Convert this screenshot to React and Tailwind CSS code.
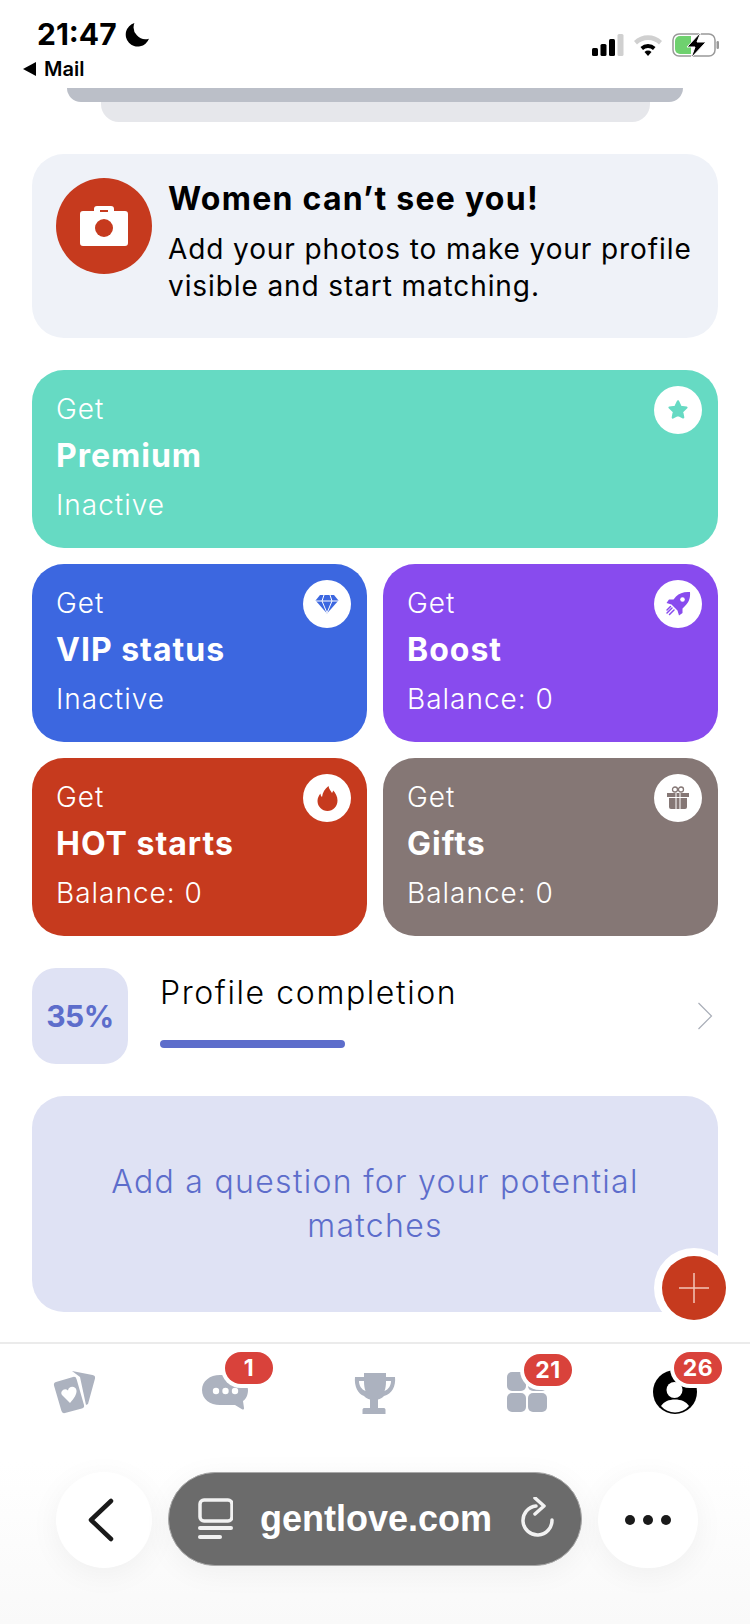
const PROMOS = [
  [{ label: "Premium", sub: "Inactive", bg: "bg-[#66dac3]", icon: "star" }],
  [
    { label: "VIP status", sub: "Inactive", bg: "bg-[#3c67e0]", icon: "gem" },
    { label: "Boost", sub: "Balance: 0", bg: "bg-[#884bee]", icon: "rocket" },
  ],
  [
    { label: "HOT starts", sub: "Balance: 0", bg: "bg-[#c63a1e]", icon: "fire" },
    { label: "Gifts", sub: "Balance: 0", bg: "bg-[#857775]", icon: "gift" },
  ],
];

function PromoIcon({ name }) {
  if (name === "star") {
    return (
      <svg width="24" height="24" viewBox="0 0 22 22" className="text-[#66dac3]">
        <path d="M11 3l2.400 5 5.400.7-4 3.800 1 5.400L11 15.300 6.200 17.900l1-5.400-4-3.800 5.400-.7z" fill="currentColor" stroke="currentColor" strokeWidth="2" strokeLinejoin="round" />
      </svg>
    );
  }
  if (name === "gem") {
    return (
      <svg width="24" height="20" viewBox="0 0 24 20" className="text-[#3c67e0]">
        <path d="M5 1h14l4.500 5.500L12 19.500.5 6.500z" fill="currentColor" />
        <path d="M.5 7h23M7 7l5 12 5-12M7 7l2-6M17 7l-2-6" fill="none" stroke="#fff" strokeWidth="1" />
      </svg>
    );
  }
  if (name === "rocket") {
    return (
      <svg width="28" height="28" viewBox="0 0 28 28" className="text-[#884bee]">
        <path d="M26 2c-6-.5-10.500 1-14 4.500L9.500 9.500H5L2.500 13l5 1.500 6 6 1.500 5 3.500-2.500v-4.500l2.500-2.500C25 12 26.500 8 26 2z" fill="currentColor" />
        <circle cx="18.500" cy="9.500" r="2.300" fill="#fff" />
        <path d="M8 18l-5 5M10 20l-4.500 4.500M6.500 16.500l-3.500 3.500" stroke="currentColor" strokeWidth="1.500" strokeLinecap="round" />
      </svg>
    );
  }
  if (name === "fire") {
    return (
      <svg width="21" height="25" viewBox="0 0 20 25" className="text-[#c63a1e]">
        <path d="M11 0c.5 3.500 2.500 5 3.500 7 .6-.8 1-1.600 1.200-2.500C18 7 20 10.500 20 14.500 20 20.500 15.500 25 10 25S0 20.500 0 15c0-3 1.300-5.500 3-7.500 0 1.500.4 2.500 1.500 3.500C5 6.500 7.500 2.500 11 0z" fill="currentColor" />
      </svg>
    );
  }
  return (
    <svg width="24" height="24" viewBox="0 0 24 24" className="text-[#857775]">
      <path d="M1 7h22v4H1z" fill="currentColor" />
      <path d="M3 12h18v9a2 2 0 0 1-2 2H5a2 2 0 0 1-2-2z" fill="currentColor" />
      <path d="M10 7v16M14 7v16" stroke="#fff" strokeWidth="1" />
      <circle cx="9" cy="3.500" r="2.500" fill="none" stroke="currentColor" strokeWidth="1.300" />
      <circle cx="15" cy="3.500" r="2.500" fill="none" stroke="currentColor" strokeWidth="1.300" />
    </svg>
  );
}

function PromoCard({ label, sub, bg, icon }) {
  return (
    <div className={`${bg} flex-1 h-[178px] rounded-[32px] pl-6 pr-4 pt-4 flex justify-between text-white`}>
      <div className="pt-1">
        <p className="text-[28px] leading-[38px] font-light tracking-[1px]">Get</p>
        <p className="text-[32px] leading-[48px] font-bold mt-1 tracking-[1px]">{label}</p>
        <p className="text-[28px] leading-[38px] font-light mt-[6px] tracking-[1px]">{sub}</p>
      </div>
      <div className="w-12 h-12 rounded-full bg-white flex items-center justify-center">
        <PromoIcon name={icon} />
      </div>
    </div>
  );
}

function StatusBar() {
  return (
    <div className="h-[88px] flex justify-between">
      <div className="pl-[23px] pt-5">
        <div className="flex items-center gap-2 pl-[14px]">
          <span className="text-[30px] leading-[28px] font-bold text-black">21:47</span>
          <svg width="25" height="25" viewBox="0 0 24 24">
            <path d="M9 1a11.500 11.500 0 0 0 14 15A11.500 11.500 0 1 1 9 1z" fill="#000" />
          </svg>
        </div>
        <div className="flex items-center gap-2 mt-[11px]">
          <svg width="13" height="14" viewBox="0 0 13 14">
            <path d="M13 0v14L0 7z" fill="#000" />
          </svg>
          <span className="text-[20px] leading-[20px] font-semibold text-black">Mail</span>
        </div>
      </div>
      <div className="flex items-center gap-[9px] pr-[30px] pt-[32px] h-[58px]">
        <svg width="32" height="22" viewBox="0 0 32 22">
          <rect x="0" y="14" width="6" height="8" rx="1.500" fill="#000" />
          <rect x="8.500" y="10" width="6" height="12" rx="1.500" fill="#000" />
          <rect x="17" y="5" width="6" height="17" rx="1.500" fill="#000" />
          <rect x="25.500" y="0" width="6" height="22" rx="1.500" fill="#d0d0d0" />
        </svg>
        <svg width="30" height="22" viewBox="0 0 30 22">
          <path d="M1 7a20 20 0 0 1 28 0l-3 3.500a15.500 15.500 0 0 0-22 0z" fill="#d0d0d0" />
          <path d="M7.500 13a11 11 0 0 1 15 0l-2.500 3a7 7 0 0 0-10 0z" fill="#000" />
          <path d="M15 22l-3.500-4a5 5 0 0 1 7 0z" fill="#000" />
        </svg>
        <svg width="48" height="26" viewBox="0 0 48 26">
          <rect x="1" y="2" width="42" height="22" rx="6" fill="none" stroke="#999" strokeWidth="1.500" />
          <rect x="44.500" y="9" width="2.500" height="8" rx="1.200" fill="#999" />
          <path d="M3 9a5 5 0 0 1 5-5h11v18H8a5 5 0 0 1-5-5z" fill="#6fd16f" />
          <path d="M29 0L15 15h8l-4 11 15-16h-9z" fill="#000" stroke="#fff" strokeWidth="1" />
        </svg>
      </div>
    </div>
  );
}

function NavBadge({ children, className }) {
  return (
    <span className={`${className} absolute -top-[18px] w-12 h-8 rounded-full bg-[#d9423b] ring-[4px] ring-white text-white text-[23px] font-bold tracking-[0.5px] flex items-center justify-center`}>
      {children}
    </span>
  );
}

function BottomNav() {
  return (
    <div className="border-t-2 border-[#ebebeb] grid grid-cols-5 pt-[26px] h-[120px]">
      <div className="flex justify-center">
        <svg width="46" height="44" viewBox="0 0 44 44">
          <path d="M19 1l20.500 4a3 3 0 0 1 2.500 3.500L35 34l-2 1L27 7z" fill="#acb2bf" />
          <path d="M3 12l17-5a3 3 0 0 1 3.600 2.200L31 35a3 3 0 0 1-2.200 3.600L12 43a3 3 0 0 1-3.600-2.200L1 15.500A3 3 0 0 1 3 12z" fill="#acb2bf" />
          <path d="M17 33l-8-8c-2.500-3.500 2.500-8 6-4.500 .5-5 8-5 8.500 0 .5 3.500-2.500 8-6.500 12.500z" fill="#fff" />
        </svg>
      </div>
      <div className="flex justify-center">
        <div className="relative w-[46px] h-[44px]">
          <svg width="46" height="40" viewBox="0 0 46 40" className="mt-1">
            <path d="M18 1h10c10 0 18 7 18 15 0 5-2 9-5 11l1 7c.2 1.500-1 2-2 1.300L33 31H18C8 31 0 25 0 16S8 1 18 1z" fill="#acb2bf" />
            <circle cx="14" cy="17" r="3.200" fill="#fff" />
            <circle cx="23.500" cy="17" r="3.200" fill="#fff" />
            <circle cx="33" cy="17" r="3.200" fill="#fff" />
          </svg>
          <NavBadge className="left-[23px]">1</NavBadge>
        </div>
      </div>
      <div className="flex justify-center">
        <svg width="46" height="44" viewBox="0 0 44 44" className="mt-[2px]">
          <path d="M11 1h22v4h9c1 9-3 17-11 19-1.500 2-4 3-6 3.500V36h6c1 0 1.500 1 1.500 2v4h-23v-4c0-1 .5-2 1.500-2h6v-8.500c-2-.5-4.500-1.500-6-3.500C5 22 1 14 2 5h9z" fill="#acb2bf" />
          <path d="M6 9h5c0 4 .5 7.500 1.500 10C8.500 17.500 6 13.500 6 9zM38 9h-5c0 4-.5 7.500-1.500 10 4-1.500 6.500-5.500 6.500-10z" fill="#fff" />
        </svg>
      </div>
      <div className="flex justify-center pl-1">
        <div className="relative w-10 h-10 mt-[2px] grid grid-cols-2 gap-[2px]">
          <span className="rounded-[5px] bg-[#acb2bf]" />
          <span className="rounded-[5px] bg-[#acb2bf]" />
          <span className="rounded-[5px] bg-[#acb2bf]" />
          <span className="rounded-[5px] bg-[#acb2bf]" />
          <NavBadge className="left-[17px]">21</NavBadge>
        </div>
      </div>
      <div className="flex justify-center">
        <div className="relative w-11 h-11">
          <svg width="44" height="44" viewBox="0 0 44 44">
            <circle cx="22" cy="22" r="22" fill="#000" />
            <circle cx="21.500" cy="20" r="8" fill="#fff" />
            <path d="M8 36c3-4.500 8-6.500 14-6.500S33 31.500 36 36a18.500 18.500 0 0 1-28 0z" fill="#fff" />
          </svg>
          <NavBadge className="left-[21px]">26</NavBadge>
        </div>
      </div>
    </div>
  );
}

function BrowserBar() {
  return (
    <div className="flex-1 bg-gradient-to-b from-white to-[#f9f9f9] flex items-start gap-4 pl-[56px] pr-[52px] pt-[10px]">
      <div className="w-24 h-24 rounded-full bg-white shadow-[0_6px_30px_rgba(0,0,0,0.05)] flex items-center justify-center pr-[6px]">
        <svg width="30" height="44" viewBox="0 0 30 44">
          <path d="M25 3L5 22l20 19" fill="none" stroke="#1a1a1a" strokeWidth="4.500" strokeLinecap="round" strokeLinejoin="round" />
        </svg>
      </div>
      <div className="flex-1 h-[94px] rounded-full bg-[#6b6b6b] border border-[#a8a8a8] shadow-[0_6px_30px_rgba(0,0,0,0.05)] flex items-center pl-[28px] pr-[26px] text-white">
        <svg width="36" height="42" viewBox="0 0 36 42">
          <rect x="3" y="2" width="32" height="21" rx="4" fill="none" stroke="#f2f2f2" strokeWidth="3.500" />
          <rect x="1" y="28" width="35" height="4" rx="2" fill="#f2f2f2" />
          <rect x="1" y="37" width="24" height="4" rx="2" fill="#f2f2f2" />
        </svg>
        <span className="ml-[27px] text-[36px] font-bold font-[Liberation_Sans,sans-serif]">gentlove.com</span>
        <svg width="36" height="44" viewBox="0 0 36 44" className="ml-auto">
          <path d="M17 9a14.500 14.500 0 1 0 16 14" fill="none" stroke="#f2f2f2" strokeWidth="3.500" strokeLinecap="round" />
          <path d="M16 1l9 8-9 8" fill="none" stroke="#f2f2f2" strokeWidth="3.500" strokeLinecap="round" strokeLinejoin="round" />
        </svg>
      </div>
      <div className="w-[100px] h-24 rounded-full bg-white shadow-[0_6px_30px_rgba(0,0,0,0.05)] flex items-center justify-center gap-2">
        <span className="w-[10px] h-[10px] rounded-full bg-[#1a1a1a]" />
        <span className="w-[10px] h-[10px] rounded-full bg-[#1a1a1a]" />
        <span className="w-[10px] h-[10px] rounded-full bg-[#1a1a1a]" />
      </div>
    </div>
  );
}

export default function App() {
  return (
    <div className="w-[750px] h-[1624px] bg-white overflow-hidden flex flex-col font-[Inter,sans-serif] text-black">
      <StatusBar />

      <div className="h-[34px] flex flex-col items-center">
        <div className="w-[616px] h-[14px] rounded-b-[18px] bg-[#bbbfc8]" />
        <div className="w-[549px] h-5 rounded-b-[18px] bg-[#e6e7eb]" />
      </div>

      <div className="mx-8 mt-8 h-[184px] rounded-[32px] bg-[#eff2f8] flex gap-4 pl-6 pt-6">
        <div className="w-24 h-24 shrink-0 rounded-full bg-[#c63a1e] flex items-center justify-center">
          <svg width="48" height="40" viewBox="0 0 48 40">
            <path d="M14 5V3a3 3 0 0 1 3-3h14a3 3 0 0 1 3 3v2h11a3 3 0 0 1 3 3v29a3 3 0 0 1-3 3H3a3 3 0 0 1-3-3V8a3 3 0 0 1 3-3z" fill="#fff" />
            <circle cx="24" cy="22" r="9" fill="#c63a1e" />
            <rect x="20" y="4" width="8" height="2" fill="#c63a1e" />
          </svg>
        </div>
        <div className="pt-[3px]">
          <p className="text-[32px] leading-[36px] font-bold tracking-[1.25px] whitespace-nowrap">Women can’t see you!</p>
          <p className="text-[28px] leading-[37px] mt-[14px] tracking-[0.9px]">
            Add your photos to make your profile visible and start matching.
          </p>
        </div>
      </div>

      <div className="mx-8 mt-8 flex flex-col gap-4">
        {PROMOS.map((row, i) => (
          <div key={i} className="flex gap-4">
            {row.map((p) => (
              <PromoCard key={p.label} {...p} />
            ))}
          </div>
        ))}
      </div>

      <div className="mx-8 mt-8 h-24 flex">
        <div className="w-24 h-24 rounded-[24px] bg-[#dfe2f4] flex items-center justify-center text-[30px] font-bold tracking-[-0.5px] text-[#5d6dcb]">
          35%
        </div>
        <div className="ml-8 flex-1">
          <p className="text-[32px] leading-[40px] font-light mt-[5px] tracking-[1.6px]">Profile completion</p>
          <div className="w-[185px] h-2 rounded-full bg-[#5d6dcb] mt-[27px]" />
        </div>
        <svg width="16" height="28" viewBox="0 0 16 28" className="self-center mr-[5px]">
          <path d="M1.500 1L14.500 14 1.500 27" fill="none" stroke="#a9aeb8" strokeWidth="1.200" />
        </svg>
      </div>

      <div className="relative mx-8 mt-8 h-[216px] rounded-[32px] bg-[#dfe2f4] flex items-center justify-center px-10 text-center text-[32px] leading-[44px] font-light tracking-[1.3px] text-[#5d6dcb]">
        Add a question for your potential matches
        <div className="absolute right-[-8px] bottom-[-8px] w-16 h-16 rounded-full bg-[#c63a1e] ring-[8px] ring-white flex items-center justify-center">
          <svg width="30" height="30" viewBox="0 0 30 30">
            <path d="M15 0v30M0 15h30" stroke="#f3c5b8" strokeWidth="1.500" />
          </svg>
        </div>
      </div>

      <div className="mt-[30px]">
        <BottomNav />
      </div>
      <BrowserBar />
    </div>
  );
}
